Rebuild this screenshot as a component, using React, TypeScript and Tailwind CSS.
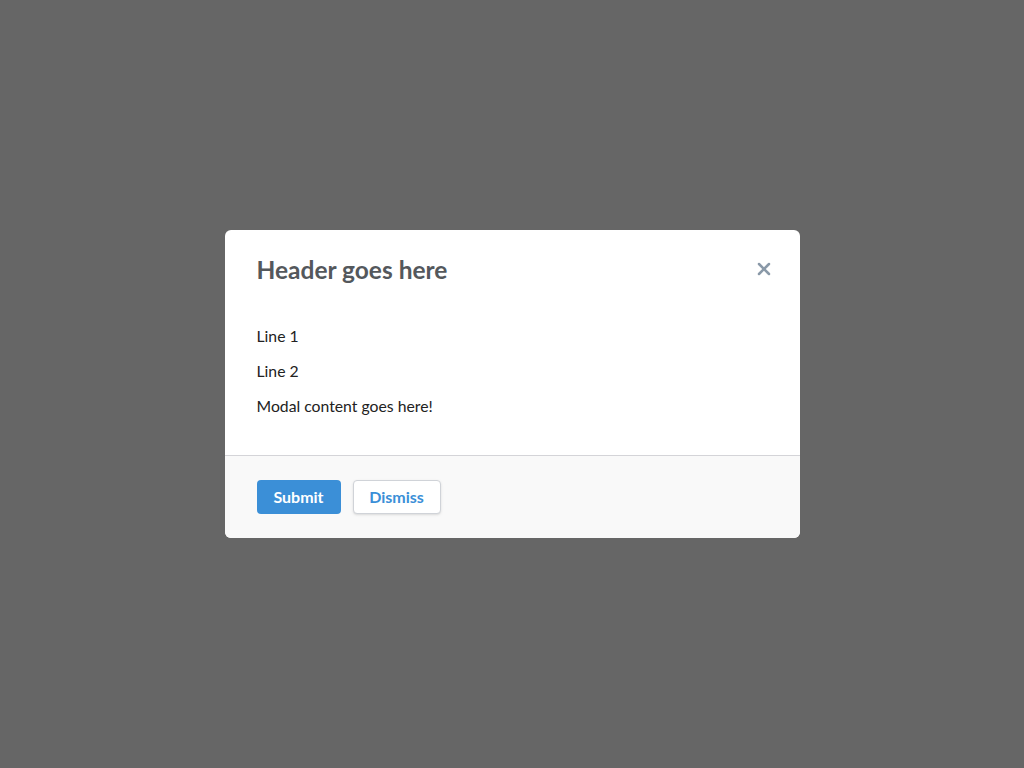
import { X } from "lucide-react";

export default function App() {
    return (
        <div
            className="flex h-[768px] w-full items-center justify-center bg-[#666666]"
            style={{ fontFamily: "Lato, 'Noto Sans', sans-serif" }}
        >
            <div className="flex w-[575px] flex-col overflow-hidden rounded-md bg-white">
                <div className="flex items-center justify-between px-8 pt-6">
                    <h2 className="text-[24.5px] leading-8 font-bold text-[#54585c]">Header goes here</h2>
                    <button className="-mt-[2px] -mr-[6px] text-[#8a99a8]">
                        <X size={20} strokeWidth={3} />
                    </button>
                </div>
                <div className="flex flex-col gap-[11px] px-8 pt-[38px] pb-[37px] text-[15.75px] leading-6 text-[#222]">
                    <p>Line 1</p>
                    <p>Line 2</p>
                    <p>Modal content goes here!</p>
                </div>
                <div className="flex gap-3 border-t border-[#d4d4d8] bg-[#f9f9f9] px-8 py-6">
                    <button className="h-[34px] w-[84px] rounded bg-[#3b8fd7] text-base font-bold text-white">
                        Submit
                    </button>
                    <button className="h-[34px] w-[88px] rounded border border-[#d0d3d8] bg-white text-base font-bold text-[#3b8fd7] shadow-sm">
                        Dismiss
                    </button>
                </div>
            </div>
        </div>
    );
}
